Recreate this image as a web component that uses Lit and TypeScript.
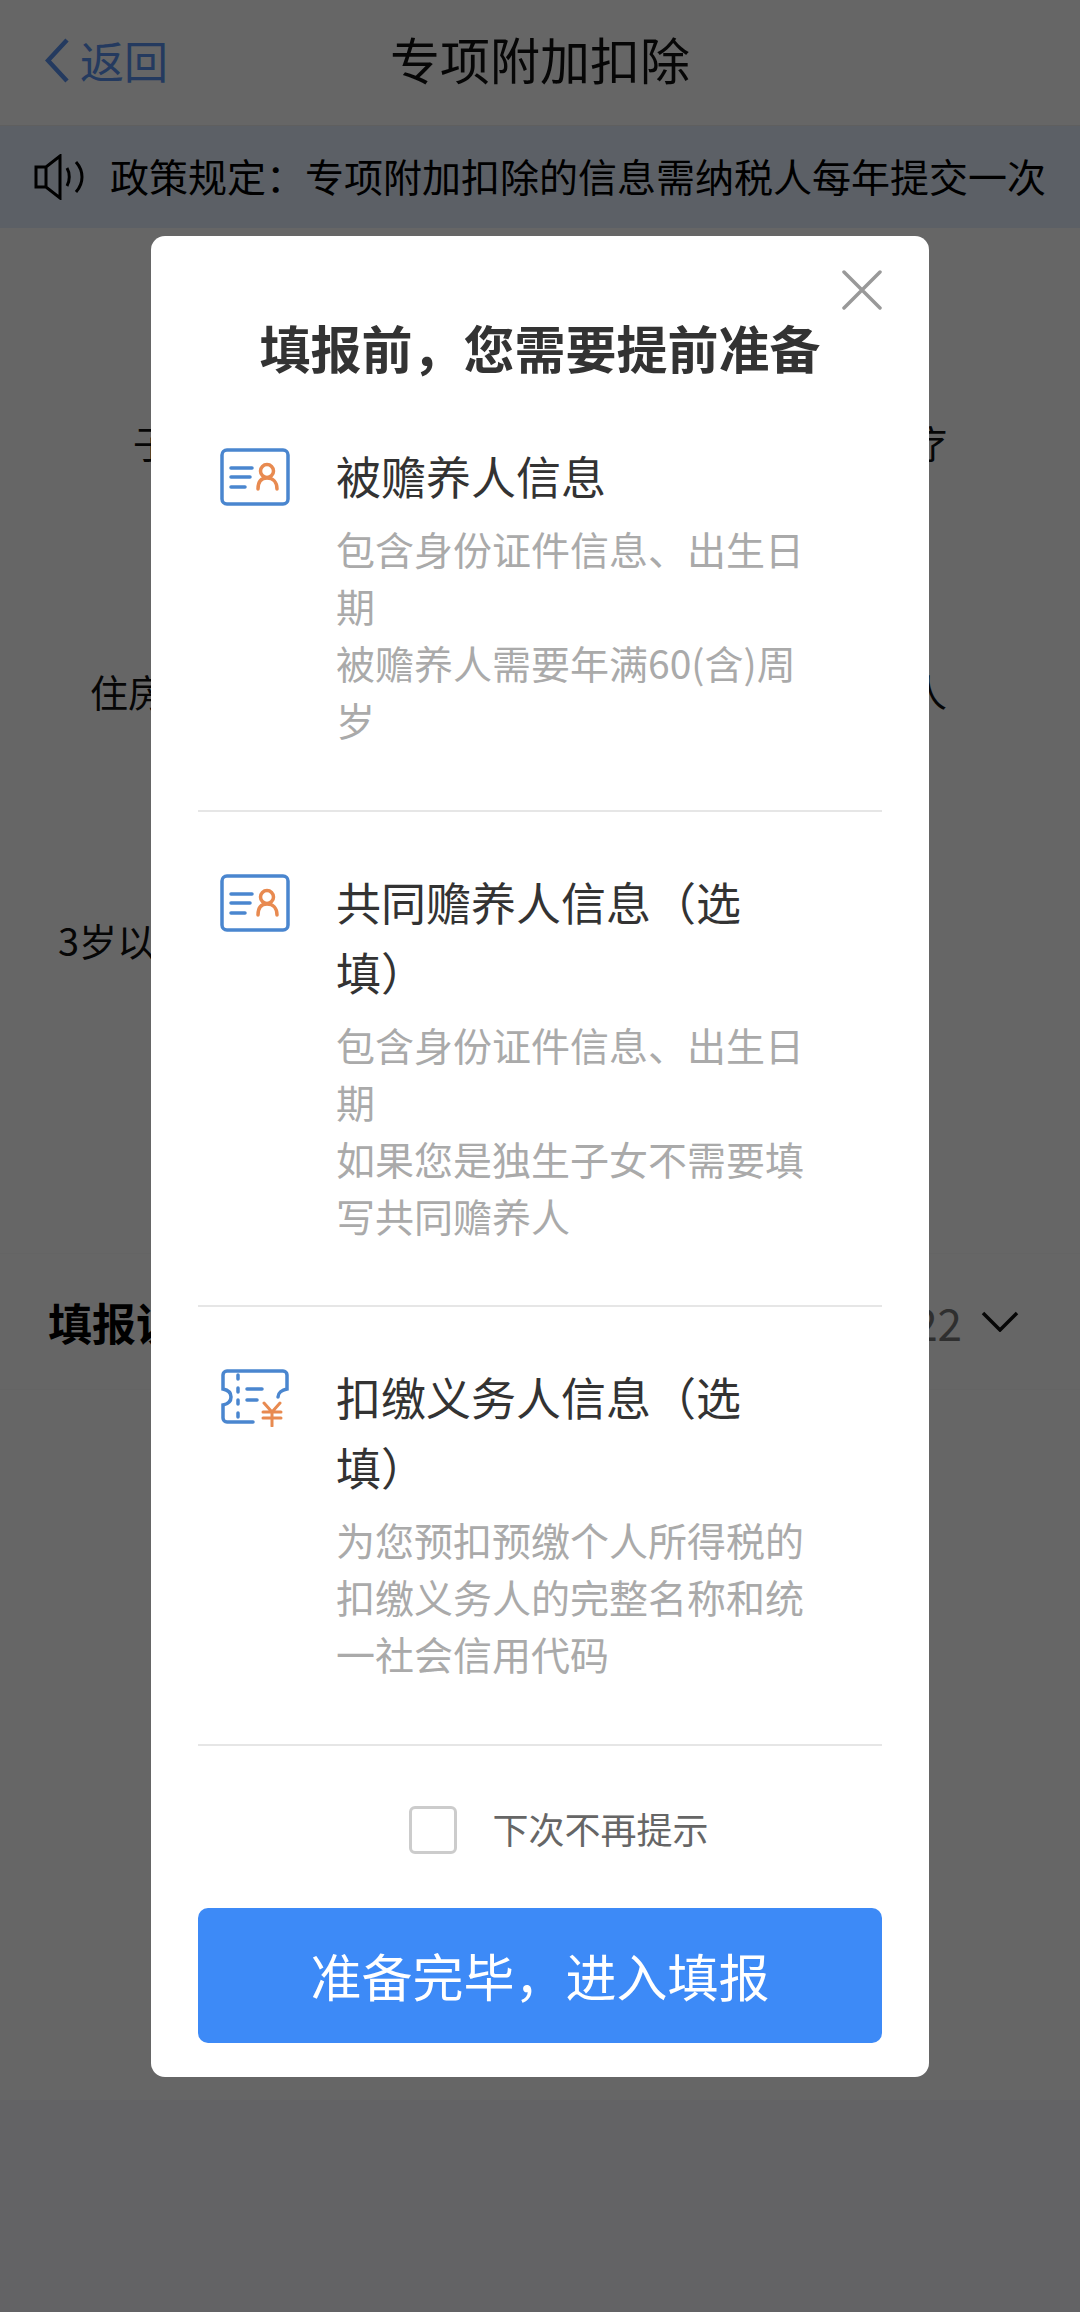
import {html, css, LitElement} from 'lit';
import {customElement} from 'lit/decorators.js';

const cardIcon = html`
  <svg class="icon" viewBox="0 0 70 58" fill="none" stroke-linecap="round">
    <rect x="2" y="2" width="66" height="54" rx="5" stroke="#4a86cf" stroke-width="3.5"/>
    <path d="M11 20H32M11 29H30M11 39H25" stroke="#4a86cf" stroke-width="3.5"/>
    <circle cx="47" cy="23" r="6.5" stroke="#e88a50" stroke-width="3.5"/>
    <path d="M38 41c0-7 3-11 9-11s10 4 10 11" stroke="#e88a50" stroke-width="3.5"/>
  </svg>
`;

const ticketIcon = html`
  <svg class="icon" viewBox="0 0 70 58" fill="none" stroke-linecap="round">
    <path d="M33 53H7a4 4 0 0 1-4-4V36c5-1 8-4 8-8s-3-7-8-8V6a4 4 0 0 1 4-4h56a4 4 0 0 1 4 4v14c-5 1-9 4-9 8" stroke="#4a86cf" stroke-width="3.5"/>
    <path d="M18 6v4M18 19v4M18 31v4M18 44v4M27 20H42M27 31H37" stroke="#4a86cf" stroke-width="3.5"/>
    <path d="M44 34l8 9 8-9M43 43H61M43 49H61M52 43V57" stroke="#e88a50" stroke-width="3"/>
  </svg>
`;

const items = [
  {
    icon: cardIcon,
    title: '被赡养人信息',
    lines: ['包含身份证件信息、出生日期', '被赡养人需要年满60(含)周岁'],
  },
  {
    icon: cardIcon,
    title: '共同赡养人信息（选填）',
    lines: ['包含身份证件信息、出生日期', '如果您是独生子女不需要填写共同赡养人'],
  },
  {
    icon: ticketIcon,
    title: '扣缴义务人信息（选填）',
    lines: ['为您预扣预缴个人所得税的扣缴义务人的完整名称和统一社会信用代码'],
  },
];

@customElement('app-root')
export class AppRoot extends LitElement {
  static styles = css`
    :host {
      display: flex;
      flex-direction: column;
      position: relative;
      width: 1080px;
      height: 2312px;
      overflow: hidden;
      background: #fff;
      font-family: 'Noto Sans CJK SC', 'Liberation Sans', sans-serif;
      color: #000;
    }

    .nav {
      height: 126px;
      box-sizing: border-box;
      padding-bottom: 10px;
      display: flex;
      align-items: center;
      justify-content: center;
      position: relative;
      border-bottom: 1px solid #eee;
      font-size: 50px;
      color: #111;
    }

    .back {
      position: absolute;
      left: 45px;
      top: 29px;
      height: 62px;
      display: flex;
      align-items: center;
      gap: 11px;
      font-size: 44px;
      color: #5a92ee;
    }

    .back svg {
      width: 24px;
      height: 45px;
    }

    .notice {
      height: 102px;
      box-sizing: border-box;
      padding: 0 0 4px 34px;
      display: flex;
      align-items: center;
      gap: 24px;
      background: #e6f0ff;
      font-size: 39px;
    }

    .notice svg {
      width: 52px;
      height: 46px;
      flex: none;
      margin-top: 4px;
    }

    .rows {
      height: 1025px;
      box-sizing: border-box;
      padding-top: 187px;
      display: flex;
      flex-direction: column;
      gap: 195px;
      font-size: 38px;
    }

    .row {
      display: flex;
      justify-content: space-between;
      height: 54px;
      line-height: 54px;
      color: #111;
    }

    .row-first {
      padding: 0 133px;
    }

    .row-second {
      padding: 0 133px 0 90px;
    }

    .row-third {
      padding: 0 133px 0 58px;
    }

    .form-row {
      height: 137px;
      box-sizing: border-box;
      display: flex;
      align-items: center;
      justify-content: space-between;
      padding: 0 61px 0 48px;
      font-size: 44px;
      font-weight: 700;
      border-top: 1px solid #fafafa;
      border-bottom: 1px solid #fafafa;
    }

    .year {
      display: flex;
      align-items: center;
      gap: 19px;
      font-weight: 400;
      color: #777;
    }

    .year svg {
      width: 38px;
      height: 21px;
    }

    .spacer {
      height: 710px;
    }

    .footer {
      flex: 1;
      background: #f8f8fc;
    }

    .scrim {
      position: absolute;
      inset: 0;
      background: rgba(0, 0, 0, 0.6);
    }

    .modal {
      position: absolute;
      left: 151px;
      top: 236px;
      width: 778px;
      height: 1841px;
      box-sizing: border-box;
      padding: 0 47px;
      background: #fff;
      border-radius: 14px;
      display: flex;
      flex-direction: column;
    }

    .close {
      position: absolute;
      right: 47px;
      top: 34px;
      width: 40px;
      height: 40px;
    }

    h1 {
      margin: 0;
      padding-top: 75px;
      height: 72px;
      line-height: 72px;
      text-align: center;
      font-size: 51px;
      font-weight: 700;
      color: #333;
      white-space: nowrap;
    }

    .item {
      display: flex;
      gap: 46px;
      padding: 65px 22px 61.5px;
      border-bottom: 2px solid #e6e6e6;
    }

    .item + .item {
      padding-top: 62px;
    }

    .icon {
      width: 70px;
      height: 58px;
      flex: none;
    }

    .item-text {
      width: 470px;
    }

    .item-title {
      font-size: 45px;
      line-height: 70px;
      color: #333;
      margin-top: -7px;
    }

    .item-desc {
      font-size: 39px;
      line-height: 57px;
      color: #aaa;
      margin-top: 9px;
    }

    .check-row {
      display: flex;
      justify-content: center;
      align-items: center;
      gap: 35px;
      height: 156px;
      padding: 6px 0 0 38px;
      font-size: 36px;
      color: #666;
    }

    .check-label {
      margin-top: -4px;
    }

    .box {
      width: 48px;
      height: 48px;
      box-sizing: border-box;
      border: 3px solid #ccc;
      border-radius: 6px;
    }

    .submit {
      height: 135px;
      flex: none;
      border: 0;
      border-radius: 10px;
      background: #3d8af7;
      color: #fff;
      font-family: inherit;
      font-size: 51px;
    }
  `;

  render() {
    return html`
      <div class="nav">
        <div class="back">
          <svg viewBox="0 0 24 45" fill="none" stroke="currentColor" stroke-width="4.5">
            <path d="M22 2L3 22.5 22 43"/>
          </svg>
          返回
        </div>
        专项附加扣除
      </div>
      <div class="notice">
        <svg viewBox="0 0 52 46" fill="none" stroke="#000" stroke-width="3">
          <path d="M2 13h10L26 2v42L12 33H2zM12 13v20"/>
          <path d="M33 14c3 5 3 13 0 18M42 8c8 9 8 21 0 30"/>
        </svg>
        政策规定：专项附加扣除的信息需纳税人每年提交一次
      </div>
      <div class="rows">
        <div class="row row-first"><span>子</span><span>疗</span></div>
        <div class="row row-second"><span>住房</span><span>人</span></div>
        <div class="row row-third"><span>3岁以</span></div>
      </div>
      <div class="form-row">
        <span>填报说明</span>
        <span class="year">
          2022
          <svg viewBox="0 0 38 21" fill="none" stroke="#111" stroke-width="3.5">
            <path d="M2 2l17 17L36 2"/>
          </svg>
        </span>
      </div>
      <div class="spacer"></div>
      <div class="footer"></div>
      <div class="scrim"></div>
      <div class="modal">
        <svg class="close" viewBox="0 0 40 40" stroke="#999" stroke-width="3.5" stroke-linecap="round">
          <path d="M2 2l36 36M38 2L2 38"/>
        </svg>
        <h1>填报前，您需要提前准备</h1>
        ${items.map(
          (item) => html`
            <div class="item">
              ${item.icon}
              <div class="item-text">
                <div class="item-title">${item.title}</div>
                <div class="item-desc">${item.lines.map((l) => html`<div>${l}</div>`)}</div>
              </div>
            </div>
          `
        )}
        <div class="check-row"><span class="box"></span><span class="check-label">下次不再提示</span></div>
        <button class="submit">准备完毕，进入填报</button>
      </div>
    `;
  }
}
